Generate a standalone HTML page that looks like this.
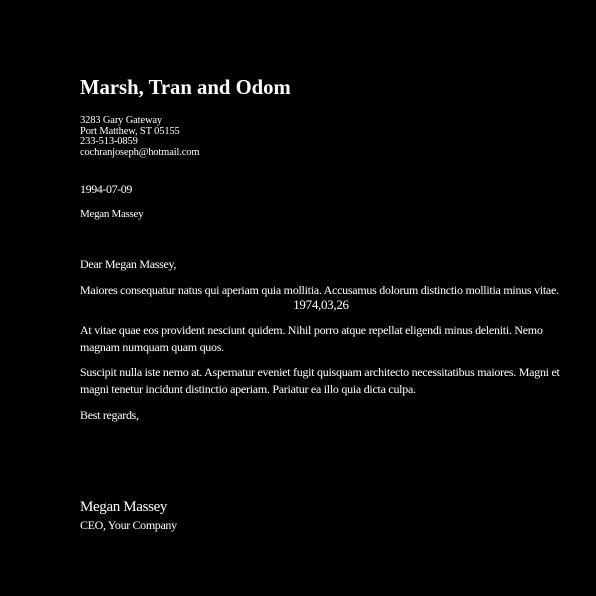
<!DOCTYPE html>
<html><head><style>
html,body{margin:0;background:#000;width:596px;height:596px;overflow:hidden}
body{font-family:"Liberation Serif",serif;color:#fff;position:relative}
div{position:absolute;left:80px;white-space:nowrap}
.p{width:482px;white-space:normal;font-size:12px;line-height:17px;letter-spacing:-0.27px}
</style></head><body>
<div style="top:76px;font-size:20.7px;font-weight:bold;line-height:24px">Marsh, Tran and Odom</div>
<div style="top:116px;font-size:10.5px;line-height:10.5px;letter-spacing:-0.15px">3283 Gary Gateway<br>Port Matthew, ST 05155<br>233-513-0859<br>cochranjoseph@hotmail.com</div>
<div style="top:181px;font-size:12px;line-height:16px;letter-spacing:-0.4px">1994-07-09</div>
<div style="top:207px;font-size:11px;line-height:14px;letter-spacing:-0.3px">Megan Massey</div>
<div style="top:256px;font-size:12px;line-height:16px;letter-spacing:-0.3px">Dear Megan Massey,</div>
<div class="p" style="top:282px"><span style="white-space:nowrap">Maiores consequatur natus qui aperiam quia mollitia. Accusamus dolorum distinctio mollitia minus vitae.</span><span style="display:block;text-align:center;font-size:13px;line-height:12px;letter-spacing:-0.3px">1974,03,26</span></div>
<div class="p" style="top:322px">At vitae quae eos provident nesciunt quidem. Nihil porro atque repellat eligendi minus deleniti. Nemo magnam numquam quam quos.</div>
<div class="p" style="top:364px">Suscipit nulla iste nemo at. Aspernatur eveniet fugit quisquam architecto necessitatibus maiores. Magni et magni tenetur incidunt distinctio aperiam. Pariatur ea illo quia dicta culpa.</div>
<div style="top:407px;font-size:12px;line-height:16px;letter-spacing:-0.3px">Best regards,</div>
<div style="top:498px;font-size:15px;line-height:18px;letter-spacing:-0.35px">Megan Massey</div>
<div style="top:518px;font-size:12px;line-height:15px;letter-spacing:-0.35px">CEO, Your Company</div>
</body></html>
